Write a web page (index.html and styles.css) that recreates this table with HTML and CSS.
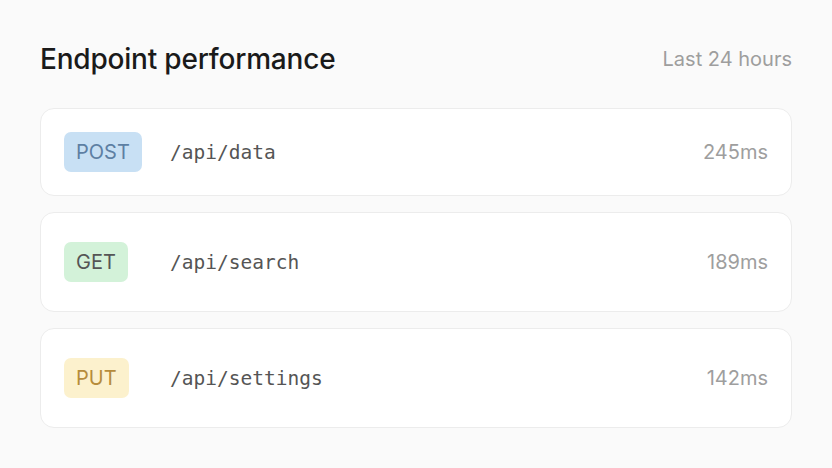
FILE: index.html
```html
<!DOCTYPE html>
<html>
<head>
<meta charset="utf-8">
<link rel="stylesheet" href="styles.css">
</head>
<body>
<div class="panel">
  <div class="header">
    <h1 class="title">Endpoint performance</h1>
    <span class="range">Last 24 hours</span>
  </div>
  <div class="list">
    <div class="row row-first">
      <span class="badge badge-post">POST</span>
      <span class="path">/api/data</span>
      <span class="ms">245ms</span>
    </div>
    <div class="row">
      <span class="badge badge-get">GET</span>
      <span class="path">/api/search</span>
      <span class="ms">189ms</span>
    </div>
    <div class="row">
      <span class="badge badge-put">PUT</span>
      <span class="path">/api/settings</span>
      <span class="ms">142ms</span>
    </div>
  </div>
</div>
</body>
</html>
```
FILE: styles.css
```css
* { box-sizing: border-box; }
html, body { margin: 0; background: #fafafa; }
body { font-family: Inter, "Noto Sans", sans-serif; width: 832px; height: 468px; overflow: hidden; }
.panel { padding: 40px 40px 0 40px; }
.header { display: flex; justify-content: space-between; align-items: center; height: 38px; margin-bottom: 30px; }
.title { margin: 0; font-size: 28px; font-weight: 500; color: #1a1a1a; letter-spacing: -0.2px; }
.range { font-size: 20px; color: #9e9e9e; }
.list { display: flex; flex-direction: column; gap: 16px; }
.row { display: grid; grid-template-columns: 106px 1fr auto; align-items: center; background: #fff; border: 1px solid #ececec; border-radius: 14px; padding: 29px 23px; }
.row-first { padding: 23px 23px; }
.badge { justify-self: start; height: 40px; display: flex; align-items: center; padding: 0 12px; border-radius: 7px; font-size: 20px; }
.badge-post { background: #c8e0f4; color: #5d7fa3; }
.badge-get { background: #d3f2d9; color: #555; }
.badge-put { background: #fcf1cd; color: #b68c3b; }
.path { font-family: "DejaVu Sans Mono", monospace; font-size: 19.5px; color: #555; }
.ms { font-size: 20px; color: #9e9e9e; }
```
